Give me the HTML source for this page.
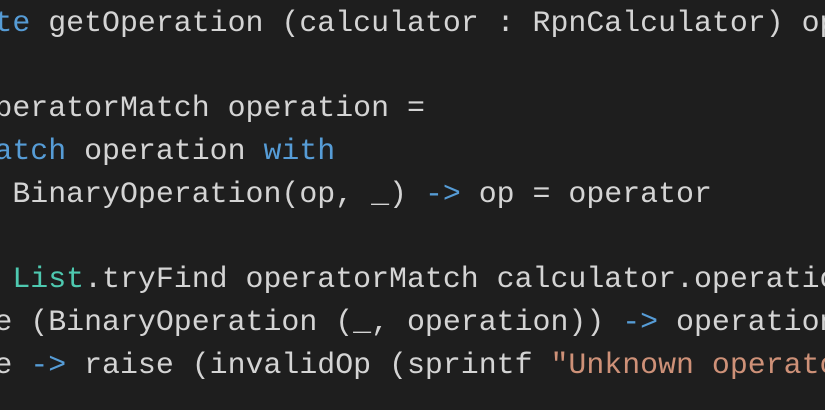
<!DOCTYPE html>
<html><head><meta charset="utf-8"><style>
html,body{margin:0;padding:0;width:825px;height:410px;overflow:hidden;background:#1e1e1e;}
#w{position:absolute;left:0;top:0;width:825px;height:410px;overflow:hidden;}
pre{position:absolute;left:-167px;top:2px;margin:0;font-family:"Liberation Mono",monospace;font-size:29.9px;line-height:42.7px;color:#d4d4d4;white-space:pre;}
.k{color:#569cd6}.t{color:#4ec9b0}.s{color:#ce9178}
</style></head><body><div id="w">
<pre><span class="k">let</span> <span class="k">private</span> getOperation (calculator : RpnCalculator) operator =

    <span class="k">let</span> operatorMatch operation =
        <span class="k">match</span> operation <span class="k">with</span>
        | BinaryOperation(op, _) <span class="k">-&gt;</span> op = operator

    <span class="k">match</span> <span class="t">List</span>.tryFind operatorMatch calculator.operations <span class="k">with</span>
    | Some (BinaryOperation (_, operation)) <span class="k">-&gt;</span> operation
    | None <span class="k">-&gt;</span> raise (invalidOp (sprintf <span class="s">"Unknown operator"</span>))</pre>
</div></body></html>
